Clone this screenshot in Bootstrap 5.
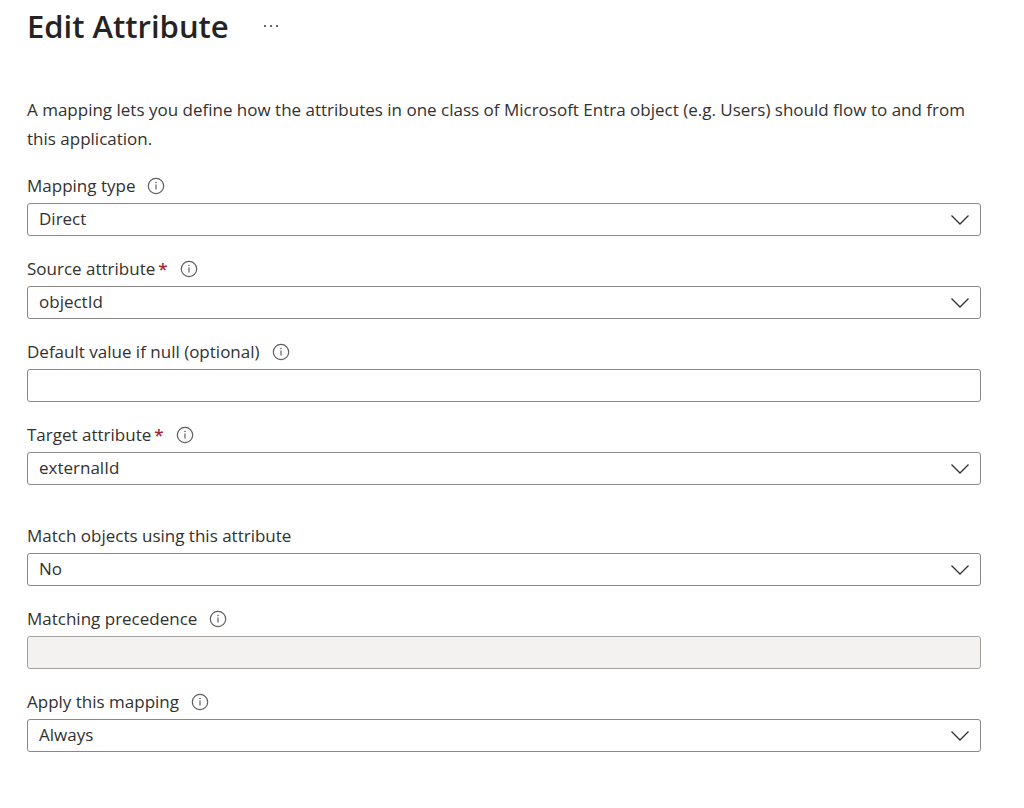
<!DOCTYPE html>
<html lang="en">
<head>
<meta charset="utf-8">
<meta name="viewport" content="width=device-width, initial-scale=1">
<title>Edit Attribute</title>
<link href="https://cdn.jsdelivr.net/npm/bootstrap@5.3.0/dist/css/bootstrap.min.css" rel="stylesheet">
<style>
body { font-family: "Open Sans", "Noto Sans", sans-serif; font-size: 17px; line-height: 24px; color: #323130; background: #fff; }
.blade { padding: 4px 43px 40px 27px; }
.blade-title { font-size: 31px; font-weight: 600; line-height: 44px; color: #252423; }
.more-btn { width: 24px; height: 24px; line-height: 0; margin-left: 30px; color: #323130; }
.intro { line-height: 29px; margin: 47px 0 21px; }
.field { margin-bottom: 21px; }
.field-head { height: 24px; margin-bottom: 5px; }
.field-group + .field-group { margin-top: 39px; }
.required-mark { color: #a4262c; font-weight: 600; margin-left: 3px; }
.info-btn { width: 18px; height: 18px; line-height: 0; margin-left: 12px; color: #605e5c; }
.field .form-control, .field .form-select {
  height: 33px; padding: 0 11px 2px; font-size: 17px; line-height: 24px;
  color: #323130; border: 1px solid #8a8886; border-radius: 3px;
}
.field .form-select {
  padding-right: 42px;
  background-image: url("data:image/svg+xml,%3Csvg xmlns='http://www.w3.org/2000/svg' viewBox='0 0 20 12'%3E%3Cpath d='M1.5 1.5 10 10l8.5-8.5' fill='none' stroke='%23323130' stroke-width='1.3'/%3E%3C/svg%3E");
  background-size: 20px 12px; background-position: right 10px center;
}
.field .form-control:disabled { background-color: #f3f2f1; border-color: #a3a19f; }
</style>
</head>
<body>
<svg class="d-none" aria-hidden="true">
  <symbol id="info" viewBox="0 0 18 18">
    <circle cx="9" cy="9" r="7.7" fill="none" stroke="currentColor" stroke-width="1.2"/>
    <path d="M9 7.5v5" stroke="currentColor" stroke-width="1.2"/>
    <circle cx="9" cy="5.5" r=".8" fill="currentColor"/>
  </symbol>
</svg>
<main class="blade">
  <header class="d-flex align-items-center">
    <h1 class="blade-title mb-0">Edit Attribute</h1>
    <button type="button" class="btn border-0 p-0 more-btn" aria-label="More actions">
      <svg width="24" height="24" viewBox="0 0 24 24" fill="currentColor" aria-hidden="true"><circle cx="6" cy="12" r="1"/><circle cx="12" cy="12" r="1"/><circle cx="18" cy="12" r="1"/></svg>
    </button>
  </header>

  <p class="intro">A mapping lets you define how the attributes in one class of Microsoft Entra object (e.g. Users) should flow to and from this application.</p>

  <form>
    <div class="field-group">
      <div class="field">
        <div class="field-head d-flex align-items-center">
          <label for="mappingType">Mapping type</label>
          <button type="button" class="btn border-0 p-0 info-btn" aria-label="About mapping type"><svg width="18" height="18"><use href="#info"/></svg></button>
        </div>
        <select id="mappingType" class="form-select"><option>Direct</option></select>
      </div>
      <div class="field">
        <div class="field-head d-flex align-items-center">
          <label for="sourceAttribute">Source attribute<span class="required-mark">*</span></label>
          <button type="button" class="btn border-0 p-0 info-btn" aria-label="About source attribute"><svg width="18" height="18"><use href="#info"/></svg></button>
        </div>
        <select id="sourceAttribute" class="form-select" required><option>objectId</option></select>
      </div>
      <div class="field">
        <div class="field-head d-flex align-items-center">
          <label for="defaultValue">Default value if null (optional)</label>
          <button type="button" class="btn border-0 p-0 info-btn" aria-label="About default value"><svg width="18" height="18"><use href="#info"/></svg></button>
        </div>
        <input id="defaultValue" type="text" class="form-control">
      </div>
      <div class="field">
        <div class="field-head d-flex align-items-center">
          <label for="targetAttribute">Target attribute<span class="required-mark">*</span></label>
          <button type="button" class="btn border-0 p-0 info-btn" aria-label="About target attribute"><svg width="18" height="18"><use href="#info"/></svg></button>
        </div>
        <select id="targetAttribute" class="form-select" required><option>externalId</option></select>
      </div>
    </div>

    <div class="field-group">
      <div class="field">
        <div class="field-head d-flex align-items-center">
          <label for="matchObjects">Match objects using this attribute</label>
        </div>
        <select id="matchObjects" class="form-select"><option>No</option></select>
      </div>
      <div class="field">
        <div class="field-head d-flex align-items-center">
          <label for="precedence">Matching precedence</label>
          <button type="button" class="btn border-0 p-0 info-btn" aria-label="About matching precedence"><svg width="18" height="18"><use href="#info"/></svg></button>
        </div>
        <input id="precedence" type="text" class="form-control" disabled>
      </div>
      <div class="field">
        <div class="field-head d-flex align-items-center">
          <label for="applyMapping">Apply this mapping</label>
          <button type="button" class="btn border-0 p-0 info-btn" aria-label="About apply this mapping"><svg width="18" height="18"><use href="#info"/></svg></button>
        </div>
        <select id="applyMapping" class="form-select"><option>Always</option></select>
      </div>
    </div>
  </form>
</main>
<script src="https://cdn.jsdelivr.net/npm/bootstrap@5.3.0/dist/js/bootstrap.bundle.min.js"></script>
</body>
</html>
